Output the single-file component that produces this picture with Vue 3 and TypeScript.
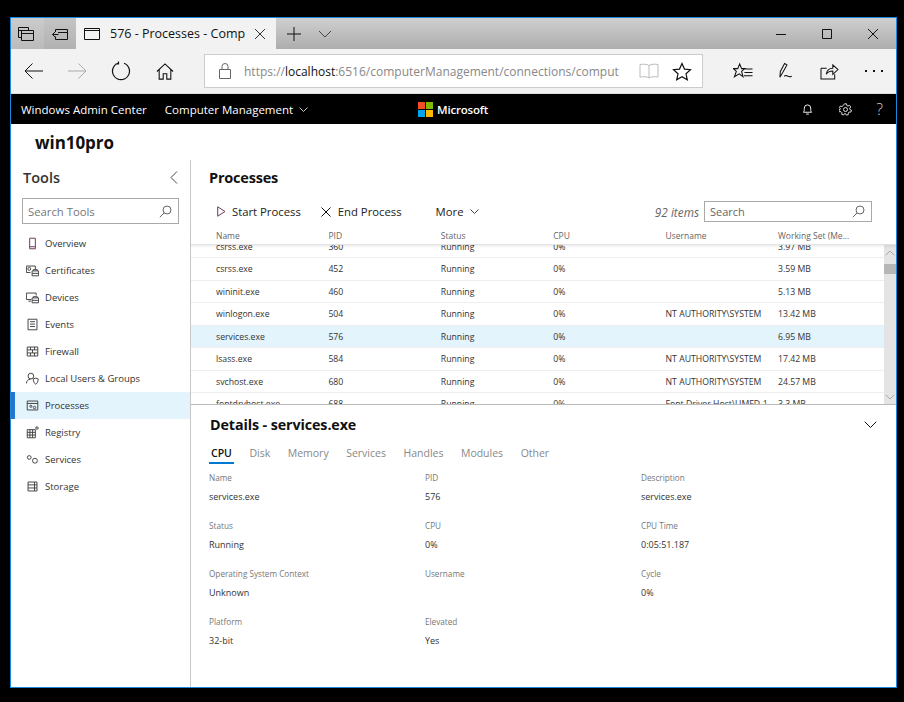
<script setup lang="ts">
interface Row { name: string; pid: string; status: string; cpu: string; user: string; mem: string; sel?: boolean }
interface Field { label: string; value: string }

const tools: string[] = ['Overview', 'Certificates', 'Devices', 'Events', 'Firewall', 'Local Users & Groups', 'Processes', 'Registry', 'Services', 'Storage']
const columns: string[] = ['Name', 'PID', 'Status', 'CPU', 'Username', 'Working Set (Me...']
const sys = 'NT AUTHORITY\\SYSTEM'
const rows: Row[] = [
  { name: 'csrss.exe', pid: '360', status: 'Running', cpu: '0%', user: '', mem: '3.97 MB' },
  { name: 'csrss.exe', pid: '452', status: 'Running', cpu: '0%', user: '', mem: '3.59 MB' },
  { name: 'wininit.exe', pid: '460', status: 'Running', cpu: '0%', user: '', mem: '5.13 MB' },
  { name: 'winlogon.exe', pid: '504', status: 'Running', cpu: '0%', user: sys, mem: '13.42 MB' },
  { name: 'services.exe', pid: '576', status: 'Running', cpu: '0%', user: '', mem: '6.95 MB', sel: true },
  { name: 'lsass.exe', pid: '584', status: 'Running', cpu: '0%', user: sys, mem: '17.42 MB' },
  { name: 'svchost.exe', pid: '680', status: 'Running', cpu: '0%', user: sys, mem: '24.57 MB' },
  { name: 'fontdrvhost.exe', pid: '688', status: 'Running', cpu: '0%', user: 'Font Driver Host\\UMFD-1', mem: '3.3 MB' }
]
const tabs: string[] = ['CPU', 'Disk', 'Memory', 'Services', 'Handles', 'Modules', 'Other']
const fields: Field[] = [
  { label: 'Name', value: 'services.exe' }, { label: 'PID', value: '576' }, { label: 'Description', value: 'services.exe' },
  { label: 'Status', value: 'Running' }, { label: 'CPU', value: '0%' }, { label: 'CPU Time', value: '0:05:51.187' },
  { label: 'Operating System Context', value: 'Unknown' }, { label: 'Username', value: '' }, { label: 'Cycle', value: '0%' },
  { label: 'Platform', value: '32-bit' }, { label: 'Elevated', value: 'Yes' }, { label: '', value: '' }
]
</script>

<template>
  <div class="screen">
    <div class="window">
      <div class="tabstrip">
        <div class="tb-btn tb-a">
          <svg width="16" height="16" viewBox="0 0 16 16"><path d="M.5 1.5h10v3M.5 1.5v10h3M3.5 4.5h12v10h-12zM3.5 7.5h12M.5 4.5h10" /></svg>
        </div>
        <div class="tb-btn tb-b">
          <svg width="16" height="16" viewBox="0 0 16 16"><path d="M3.5 3.5h12v10h-12v-3M3.5 6V3.5M6.5 8.5H.5M3 6 .5 8.5 3 11M6 6.500h9.500" /></svg>
        </div>
        <div class="tab">
          <svg width="16" height="14" viewBox="0 0 16 14"><path d="M.5 1.500h15v11H.5zM.5 3.500h15" /></svg>
          <span class="tab-title">576 - Processes - Comp</span>
          <svg class="tab-x" width="12" height="12" viewBox="0 0 12 12"><path d="M1 1l10 10M11 1 1 11" /></svg>
        </div>
        <svg class="plus" width="14" height="14" viewBox="0 0 14 14"><path d="M7 0v14M0 7h14" /></svg>
        <svg class="caret" width="14" height="8" viewBox="0 0 14 8"><path d="M1 1l6 6 6-6" /></svg>
        <div class="spacer"></div>
        <div class="win-btn"><svg width="12" height="12" viewBox="0 0 12 12"><path d="M1 6.500h10" /></svg></div>
        <div class="win-btn"><svg width="12" height="12" viewBox="0 0 12 12"><path d="M1.500 1.500h9v9h-9z" /></svg></div>
        <div class="win-btn last"><svg width="12" height="12" viewBox="0 0 12 12"><path d="M1 1l10 10M11 1 1 11" /></svg></div>
      </div>

      <div class="navbar">
        <svg class="nb-back" width="20" height="16" viewBox="0 0 20 16"><path d="M19 8H1M8.500 .5 1 8l7.500 7.500" /></svg>
        <svg class="nb-fwd" width="20" height="16" viewBox="0 0 20 16"><path d="M1 8h18M11.500 .5 19 8l-7.500 7.500" /></svg>
        <svg class="nb-ref" width="20" height="20" viewBox="0 0 20 20"><path d="M7 2.200A8.500 8.500 0 1 0 13 2.200M7.500 .5V3H4.500" /></svg>
        <svg class="nb-home" width="18" height="17" viewBox="0 0 20 19"><path d="M1 9.500 10 1l9 8.500M3.500 7.500v10.500h4.500v-6h4v6h4.500V7.500" /></svg>
        <div class="address">
          <svg width="12" height="16" viewBox="0 0 12 16"><path d="M.5 6.500h11v9H.5zM3 6.500V3.500a3 3 0 0 1 6 0v3" /></svg>
          <div class="url"><span>https://</span><b>localhost</b><span>:6516/computerManagement/connections/comput</span></div>
          <svg class="book" width="20" height="16" viewBox="0 0 20 16"><path d="M10 2.500v12.500M10 2.500C8 1 4 1 1 1.500v12.500c3-.5 7-.5 9 1 2-1.500 6-1.500 9-1V1.500c-3-.5-7-.5-9 1" /></svg>
          <svg class="star" width="20" height="19" viewBox="0 0 20 19"><path d="M10 1.500l2.500 5.600 6 .6-4.500 4.100 1.300 6L10 14.700l-5.300 3.100 1.300-6L1.500 7.700l6-.6z" /></svg>
        </div>
        <svg class="nb-act a1" width="20" height="18" viewBox="0 0 21 18"><path d="M7 1.500 9 6.500h3.500L9 9.500l1.500 5.500L6.500 12 1.500 15 3.500 9.500 .5 6.500H5zM13 7h7.500M12 10.500h8.500M11.500 14h9" /></svg>
        <svg class="nb-act a2" width="17" height="19" viewBox="0 0 18 20"><path d="M2 16 2.500 10 7 1.500l2.500 1.500L5 11zM2 16l3-5M6.500 15c2-1.500 2-1 3.500-.2s2.500 1.200 4.500.2" /></svg>
        <svg class="nb-act a3" width="19" height="17" viewBox="0 0 20 18"><path d="M1 5.500v11.500h14.500v-5M6.500 12c.5-4 3-6.500 7-6.500V2l5.500 5-5.500 5V8.500c-3 0-5.500 1-7 3.500zM1 5.500h6" /></svg>
        <div class="dots"><i></i><i></i><i></i></div>
      </div>

      <div class="blackbar">
        <span class="bb-title">Windows Admin Center</span>
        <span class="bb-menu">Computer Management</span>
        <svg class="bb-caret" width="9" height="5" viewBox="0 0 9 5"><path d="M.5 .5l4 4 4-4" /></svg>
        <div class="ms-logo"><i class="m-r"></i><i class="m-g"></i><i class="m-b"></i><i class="m-y"></i></div>
        <span class="ms-word">Microsoft</span>
        <svg class="bb-bell" width="11" height="13" viewBox="0 0 12 13"><path d="M1.500 9.500c1-1 1-2 1-4.500a3.500 3.500 0 0 1 7 0c0 2.500 0 3.500 1 4.500zM4.500 11.500h3" /></svg>
        <svg class="bb-gear" width="13" height="13" viewBox="0 0 13 13"><circle cx="6.500" cy="6.500" r="2" /><path d="M5.500 .8h2l.3 1.700 1.200.6 1.500-.8 1.300 1.600-1.100 1.300.2 1.200 1.500.8-.5 1.900-1.700-.1-.9 1-.1 1.700-1.900.4-.8-1.500H5.500l-.9 1.400-1.900-.7.2-1.700-.9-.9-1.700.1-.4-1.900 1.500-.8V5.800L.3 4.700l1-1.700 1.600.6 1-.8z" /></svg>
        <span class="bb-help">?</span>
      </div>

      <div class="server">win10pro</div>

      <div class="body">
        <aside class="sidebar">
          <div class="tools-head">
            <span>Tools</span>
            <svg width="8" height="13" viewBox="0 0 8 13"><path d="M7 .5 1 6.500l6 6" /></svg>
          </div>
          <div class="tools-search">
            <span>Search Tools</span>
            <svg width="13" height="13" viewBox="0 0 13 13"><circle cx="8" cy="5" r="4" /><path d="M5 8 .8 12.200" /></svg>
          </div>
          <ul class="tool-list">
            <li v-for="(t, i) in tools" :key="t" :class="{ active: t === 'Processes' }">
              <svg class="tool-ico" width="13" height="13" viewBox="0 0 16 16">
                <g v-if="i === 0"><path d="M4.500 1.500h7v13h-7zM4.500 12h7" class="plum" /></g>
                <g v-else-if="i === 1"><path d="M.5 2.500h11v5M.5 2.500v8h5" /><circle cx="4" cy="6" r="1.800" /><path d="M7.500 8.500h8v6h-8zM9 8.500V7h5v1.500M7.500 11.500h8" /></g>
                <g v-else-if="i === 2"><path d="M.5 2.500h12v3M.5 2.500v8h6M3 12.500h3M7.500 8.500h8v6h-8zM9 8.500V7h5v1.500M7.500 11.500h8" /></g>
                <g v-else-if="i === 3"><path d="M2.500 1.500h11v13h-11zM5 4.500h6M5 7.500h6M5 10.500h6" /></g>
                <g v-else-if="i === 4"><path d="M1.500 2.500h13v11h-13zM1.500 6h13M1.500 9.800h13M5.500 2.500V6M10.500 2.500V6M8 6v3.800M5.500 9.800v3.700M10.500 9.800v3.700" /></g>
                <g v-else-if="i === 5"><circle cx="6" cy="5" r="3.500" /><path d="M.5 14c0-3 2-5 5-5M9 8.500l3-1 3 1c0 3-1 5.500-3 6.500-2-1-3-3.500-3-6.500z" /></g>
                <g v-else-if="i === 6"><path d="M1.500 2.500h13v11h-13zM1.500 5.500h13" /><circle cx="6" cy="9" r="1.300" /><circle cx="10.500" cy="10.500" r="1.500" /></g>
                <g v-else-if="i === 7"><path d="M1.500 4.500h10v10h-10zM1.500 7.800h10M1.500 11.100h10M4.800 4.500v10M8.100 4.500v10" /><circle cx="13.500" cy="2.500" r="1.500" /></g>
                <g v-else-if="i === 8"><circle cx="4" cy="5.500" r="2.300" /><circle cx="11" cy="9.500" r="3" /></g>
                <g v-else><path d="M2.500 2.500h11v11h-11zM2.500 6h11M2.500 9.800h11M10.500 2.500v11" /></g>
              </svg>
              <span>{{ t }}</span>
            </li>
          </ul>
        </aside>

        <main class="main">
          <h2 class="proc-title">Processes</h2>
          <div class="toolbar">
            <button class="tool-btn first">
              <svg width="9" height="11" viewBox="0 0 9 11"><path d="M.7 .8 8 5.500.7 10.200z" class="plum" /></svg>
              <span>Start Process</span>
            </button>
            <button class="tool-btn second">
              <svg width="10" height="10" viewBox="0 0 10 10"><path d="M.5 .5l9 9M9.500 .5l-9 9" /></svg>
              <span>End Process</span>
            </button>
            <button class="tool-btn third">
              <span>More</span>
              <svg width="9" height="5" viewBox="0 0 9 5"><path d="M.5 .5l4 4 4-4" /></svg>
            </button>
            <div class="spacer"></div>
            <em class="count">92 items</em>
            <div class="grid-search">
              <span>Search</span>
              <svg width="13" height="13" viewBox="0 0 13 13"><circle cx="8" cy="5" r="4" /><path d="M5 8 .8 12.200" /></svg>
            </div>
          </div>
          <div class="thead"><span v-for="c in columns" :key="c">{{ c }}</span></div>
          <div class="tbody">
            <div class="rows">
              <div v-for="r in rows" :key="r.name + r.pid" class="row" :class="{ sel: r.sel }">
                <span>{{ r.name }}</span><span>{{ r.pid }}</span><span>{{ r.status }}</span><span>{{ r.cpu }}</span><span>{{ r.user }}</span><span>{{ r.mem }}</span>
              </div>
            </div>
            <div class="scrollbar">
              <svg width="10" height="6" viewBox="0 0 10 6"><path d="M.7 5.300 5 1l4.300 4.300" /></svg>
              <div class="thumb"></div>
              <svg class="down" width="10" height="6" viewBox="0 0 10 6"><path d="M.7 .7 5 5 9.300 .7" /></svg>
            </div>
          </div>
          <section class="details">
            <div class="det-head">
              <h2>Details - services.exe</h2>
              <svg width="13" height="8" viewBox="0 0 13 8"><path d="M.7 .7l5.800 5.800L12.300 .7" /></svg>
            </div>
            <div class="det-tabs">
              <span v-for="(t, i) in tabs" :key="t" :class="{ on: i === 0 }">{{ t }}</span>
            </div>
            <div class="fields">
              <div v-for="(f, i) in fields" :key="i" class="field">
                <label>{{ f.label }}</label>
                <span>{{ f.value }}</span>
              </div>
            </div>
          </section>
        </main>
      </div>
    </div>
  </div>
</template>

<style scoped>
.screen { width: 904px; height: 702px; background: #000; padding: 17px 7px 14px 10px; box-sizing: border-box; font-family: "Open Sans", "Noto Sans", sans-serif; color: #222; overflow: hidden; }
.window { height: 100%; border: 1px solid #1a8ae0; background: #fff; display: flex; flex-direction: column; box-sizing: border-box; }
svg { fill: none; stroke: #111; stroke-width: 1; flex: none; display: block; }
.spacer { flex: 1; }

.tabstrip { height: 31px; flex: none; display: flex; align-items: center; background: linear-gradient(#cfcfcf, #adadad); }
.tb-btn { height: 31px; display: flex; align-items: center; justify-content: center; }
.tb-a { width: 33px; background: linear-gradient(#cbcbcb, #bbb); padding-right: 3px; box-sizing: border-box; }
.tb-b { width: 32px; background: linear-gradient(#c4c4c4, #b2b2b2); }
.tab { width: 200px; height: 31px; background: #f2f2f2; display: flex; align-items: center; padding-left: 8px; box-sizing: border-box; }
.tab-title { font-size: 12.5px; color: #111; margin-left: 10px; white-space: nowrap; width: 139px; overflow: hidden; }
.tab-x { margin-left: 5px; stroke: #333; }
.plus { margin-left: 11px; }
.caret { margin-left: 17px; stroke: #444; }
.win-btn { width: 46px; display: flex; justify-content: center; }
.win-btn.last { width: 46px; }

.navbar { height: 45px; flex: none; background: #f2f2f2; border-bottom: 1px solid #ddd; box-sizing: border-box; display: flex; align-items: center; padding-left: 13px; }
.nb-fwd { margin-left: 23px; stroke: #aaa; }
.nb-ref { margin-left: 24px; stroke-width: 1.200; }
.nb-home { margin-left: 25px; stroke-width: 1.200; }
.address { width: 499px; height: 34px; margin-left: 30px; background: #fff; border: 1px solid #ccc; box-sizing: border-box; display: flex; align-items: center; padding-left: 14px; }
.address > svg:first-child { stroke: #666; }
.url { width: 386px; margin-left: 13px; font-size: 12px; color: #888; white-space: nowrap; overflow: hidden; }
.url b { font-weight: 400; color: #111; }
.book { margin-left: 9px; stroke: #bbb; }
.star { margin-left: 13px; stroke-width: 1.200; }
.nb-act { stroke-width: 1.100; }
.a1 { margin-left: 30px; }
.a2 { margin-left: 25px; }
.a3 { margin-left: 25px; }
.dots { display: flex; gap: 6px; margin-left: 26px; }
.dots i { width: 2px; height: 2px; background: #111; }

.blackbar { height: 30px; flex: none; background: #000; color: #fff; display: flex; align-items: center; padding-left: 10px; font-size: 11.500px; }
.bb-menu { margin-left: 18px; }
.bb-caret { margin-left: 6px; stroke: #ccc; }
.ms-logo { width: 15px; height: 15px; margin-left: 110px; display: grid; grid-template-columns: 7px 7px; grid-template-rows: 7px 7px; gap: 1px; }
.m-r { background: #f25022; } .m-g { background: #7fba00; } .m-b { background: #00a4ef; } .m-y { background: #ffb900; }
.ms-word { margin-left: 4px; font-size: 11.500px; font-weight: 600; letter-spacing: -.2px; }
.bb-bell { margin-left: 314px; stroke: #fff; }
.bb-gear { margin-left: 26px; stroke: #ddd; }
.bb-help { margin-left: 24px; font-size: 16px; font-weight: 300; color: #ccc; }

.server { height: 36px; flex: none; box-sizing: border-box; padding: 7px 0 0 24px; font-size: 17px; line-height: 24px; font-weight: 700; color: #111; letter-spacing: -.05px; }
.body { flex: 1; display: flex; min-height: 0; }
.sidebar { width: 180px; flex: none; border-right: 1px solid #c8c8c8; box-sizing: border-box; }
.tools-head { height: 38px; display: flex; align-items: center; justify-content: space-between; padding: 0 12px 3px 12px; box-sizing: border-box; font-size: 14.500px; font-weight: 600; color: #333; }
.tools-head svg { stroke: #444; }
.tools-search { margin-left: 11px; width: 157px; height: 26px; border: 1px solid #aaa; box-sizing: border-box; display: flex; align-items: center; justify-content: space-between; padding: 0 6px 0 5px; font-size: 11.300px; color: #777; }
.tools-search svg, .grid-search svg { stroke: #666; }
.tool-list { list-style: none; margin: 6px 0 0; padding: 0; }
.tool-list li { height: 27px; display: flex; align-items: center; padding-left: 15px; font-size: 9.500px; color: #333; box-sizing: border-box; }
.tool-list li span { margin-left: 6px; }
.tool-list li.active { background: #e3f4fc; border-left: 4px solid #2276d2; padding-left: 11px; }
.tool-ico { stroke: #444; stroke-width: 1.200; }
.plum { stroke: #6b3a5e; }

.main { flex: 1; min-width: 0; display: flex; flex-direction: column; }
.proc-title { margin: 0; height: 38px; box-sizing: border-box; padding: 6px 0 0 18px; font-size: 14.500px; line-height: 24px; font-weight: 700; color: #111; letter-spacing: -.2px; }
.toolbar { height: 27px; flex: none; display: flex; align-items: center; padding: 0 24px 0 26px; font-size: 11.300px; }
.tool-btn { border: 0; background: none; padding: 0; font: inherit; color: #222; display: flex; align-items: center; }
.first span { margin-left: 6px; }
.second { margin-left: 20px; }
.second span { margin-left: 7px; }
.third { margin-left: 34px; }
.third svg { margin-left: 6px; stroke: #444; }
.count { font-size: 11.800px; color: #666; margin-right: 5px; }
.grid-search { width: 168px; height: 21px; border: 1px solid #aaa; box-sizing: border-box; display: flex; align-items: center; justify-content: space-between; padding: 0 6px 0 5px; font-size: 11px; color: #666; }

.thead { height: 20px; flex: none; display: grid; grid-template-columns: repeat(5, 112.400px) 1fr; padding: 2px 12px 0 25px; align-items: center; font-size: 8.500px; color: #666; box-sizing: border-box; box-shadow: 0 2px 2px rgba(0,0,0,.06); border-bottom: 1px solid #e2e2e2; position: relative; z-index: 1; }
.tbody { height: 160px; flex: none; display: flex; overflow: hidden; border-bottom: 1px solid #bbb; box-sizing: border-box; }
.rows { flex: 1; margin-top: -9.500px; }
.row { height: 22.500px; display: grid; grid-template-columns: repeat(5, 112.400px) 1fr; padding: 1px 0 0 25px; align-items: center; font-size: 8.700px; color: #333; border-bottom: 1px solid #eee; box-sizing: border-box; white-space: nowrap; }
.row.sel { background: #e3f4fc; }
.scrollbar { width: 12px; background: #e4e4e4; display: flex; flex-direction: column; align-items: center; position: relative; }
.scrollbar svg { stroke: #aaa; margin-top: 5px; }
.thumb { width: 12px; height: 10px; background: #b6b6b6; margin-top: 8px; }
.scrollbar .down { position: absolute; bottom: 4px; margin: 0; }

.details { flex: 1; min-height: 0; }
.det-head { height: 39px; display: flex; align-items: center; justify-content: space-between; padding: 0 19px 0 19px; }
.det-head h2 { margin: 0; font-size: 14.300px; font-weight: 700; color: #111; letter-spacing: -.1px; }
.det-tabs { display: flex; height: 19px; padding: 1px 0 0 20px; box-sizing: border-box; font-size: 10.500px; color: #888; gap: 17.500px; }
.det-tabs span { height: 17px; line-height: 17px; }
.det-tabs .on { color: #111; font-weight: 600; border-bottom: 2px solid #0078d4; margin-left: -2px; padding: 0 2px; box-sizing: content-box; margin-right: -2px; }
.fields { display: grid; grid-template-columns: 216px 216px 1fr; grid-auto-rows: 48px; padding: 6px 0 0 18px; }
.field { display: flex; flex-direction: column; }
.field label { font-size: 8.200px; color: #777; height: 18px; line-height: 18px; }
.field span { font-size: 9px; color: #333; line-height: 20px; }
</style>
